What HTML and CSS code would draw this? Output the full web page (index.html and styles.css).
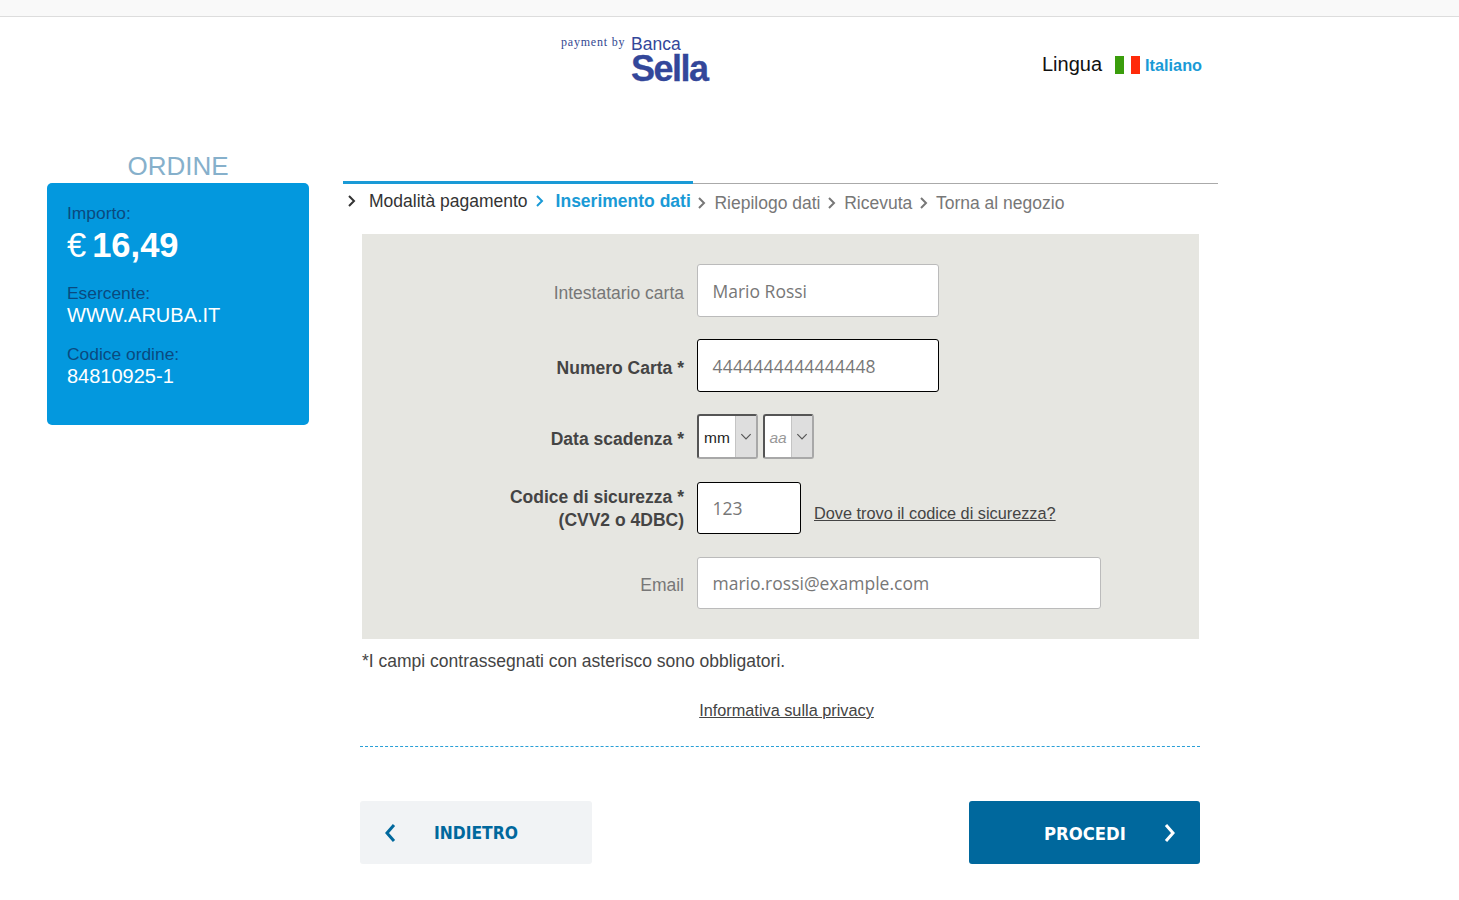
FILE: index.html
```html
<!DOCTYPE html>
<html lang="it">
<head>
    <meta charset="UTF-8">
    <title>Pagamento</title>
    <link rel="stylesheet" href="styles.css">
</head>
<body>
    <div class="topstrip"></div>
    <div class="header">
        <div class="brand">
            <span class="paymentby">payment by</span>
            <div class="logo"><span class="logo-top">Banca</span><span class="logo-main">Sella</span></div>
        </div>
        <div class="lang">
            <span class="lang-label">Lingua</span>
            <span class="flag"><i class="green"></i><i class="white"></i><i class="red"></i></span>
            <span class="lang-name">Italiano</span>
        </div>
    </div>
    <div class="page">
        <div class="side">
            <p class="side-title">ORDINE</p>
            <div class="box">
                <p class="k">Importo:</p>
                <p class="amount"><span class="euro">€</span>16,49</p>
                <p class="k gap">Esercente:</p>
                <p class="v">WWW.ARUBA.IT</p>
                <p class="k gap">Codice ordine:</p>
                <p class="v">84810925-1</p>
            </div>
        </div>
        <div class="main">
            <div class="steps">
                <span class="step done"><svg class="chev" viewBox="0 0 10 14"><path d="M2 2l5 5-5 5"/></svg>Modalità pagamento</span>
                <span class="step now"><svg class="chev" viewBox="0 0 10 14"><path d="M2 2l5 5-5 5"/></svg>Inserimento dati</span>
                <span class="step"><svg class="chev" viewBox="0 0 10 14"><path d="M2 2l5 5-5 5"/></svg>Riepilogo dati</span>
                <span class="step"><svg class="chev" viewBox="0 0 10 14"><path d="M2 2l5 5-5 5"/></svg>Ricevuta</span>
                <span class="step"><svg class="chev" viewBox="0 0 10 14"><path d="M2 2l5 5-5 5"/></svg>Torna al negozio</span>
            </div>
            <div class="content">
                <div class="form">
                    <div class="row r1">
                        <label class="lbl">Intestatario carta</label>
                        <div class="field w-name">Mario Rossi</div>
                    </div>
                    <div class="row r2">
                        <label class="lbl req">Numero Carta *</label>
                        <div class="field w-name strong digits">4444444444444448</div>
                    </div>
                    <div class="row r3">
                        <label class="lbl req">Data scadenza *</label>
                        <div class="select"><span class="sel-text">mm</span><span class="sel-btn"><svg viewBox="0 0 10 6"><path d="M1 1l4 4 4-4"/></svg></span></div>
                        <div class="select off"><span class="sel-text">aa</span><span class="sel-btn"><svg viewBox="0 0 10 6"><path d="M1 1l4 4 4-4"/></svg></span></div>
                    </div>
                    <div class="row r4">
                        <label class="lbl req lbl-two">Codice di sicurezza *<br>(CVV2 o 4DBC)</label>
                        <div class="field w-cvv strong">123</div>
                        <a class="link where" href="#">Dove trovo il codice di sicurezza?</a>
                    </div>
                    <div class="row r5">
                        <label class="lbl lbl-mail">Email</label>
                        <div class="field w-mail">mario.rossi@example.com</div>
                    </div>
                </div>
                <p class="note">*I campi contrassegnati con asterisco sono obbligatori.</p>
            </div>
            <div class="privacy"><a class="link" href="#">Informativa sulla privacy</a></div>
            <div class="actions">
                <a class="btn back" href="#"><svg class="btn-ico" viewBox="0 0 12 18"><path d="M10 1L3 9l7 8"/></svg><span>INDIETRO</span></a>
                <a class="btn next" href="#"><span>PROCEDI</span><svg class="btn-ico" viewBox="0 0 12 18"><path d="M2 1l7 8-7 8"/></svg></a>
            </div>
        </div>
    </div>
</body>
</html>
```
FILE: styles.css
```css
* {
    box-sizing: border-box;
}
body {
    margin: 0;
    background: white;
    font-family: "Liberation Sans", Arial, sans-serif;
    color: #333;
}
p {
    margin: 0;
}
.topstrip {
    height: 17px;
    background: #f9f9f9;
    border-bottom: 1px solid #ddd;
}
.header {
    display: flex;
    height: 117px;
    padding-left: 561px;
}
.brand {
    display: flex;
    width: 481px;
    padding-top: 18px;
}
.paymentby {
    font-family: "Liberation Serif", serif;
    font-size: 12px;
    color: #33478f;
    letter-spacing: 0.8px;
    width: 70px;
}
.logo {
    display: flex;
    flex-direction: column;
    color: #33479a;
}
.logo-top {
    font-size: 17.5px;
    line-height: 18px;
    font-weight: normal;
}
.logo-main {
    font-size: 36px;
    font-weight: bold;
    line-height: 30px;
    letter-spacing: -1.5px;
    margin-top: 1px;
    -webkit-text-stroke: 0.3px #33479a;
}
.lang {
    display: flex;
    align-items: center;
    height: 30px;
    margin-top: 32px;
}
.lang-label {
    font-size: 20px;
    color: #111;
    margin-right: 13px;
}
.flag {
    display: flex;
    height: 18px;
    margin-top: 2px;
    margin-right: 5px;
}
.flag i {
    width: 9px;
    display: block;
}
.flag .green {
    background: #3a9d0c;
}
.flag .white {
    background: white;
    width: 7px;
}
.flag .red {
    background: #ff2a0a;
}
.lang-name {
    font-size: 16.3px;
    font-weight: bold;
    color: #1a9ad6;
    margin-top: 2px;
}
.page {
    display: flex;
    padding-left: 47px;
    padding-top: 17px;
}
.side {
    width: 262px;
    margin-right: 34px;
}
.side-title {
    font-size: 26px;
    line-height: 30px;
    margin-bottom: 2px;
    text-align: center;
    color: #86b0cb;
}
.box {
    height: 242px;
    background: #0398de;
    border-radius: 5px;
    padding: 20px 20px;
    font-size: 17.4px;
    color: white;
}
.box .k {
    color: #0a4a80;
    line-height: 20px;
}
.box .k.gap {
    margin-top: 17px;
}
.box .v {
    font-size: 20px;
    line-height: 24px;
}
.amount {
    font-size: 34.5px;
    font-weight: bold;
    line-height: 41px;
    margin-top: 2px;
}
.euro {
    font-weight: normal;
    margin-right: 6px;
}
.main {
    width: 875px;
}
.steps {
    display: flex;
    height: 51px;
    margin-top: 32px;
    border-top: 1px solid #aaa;
    position: relative;
    font-size: 17.5px;
    color: #777;
    padding-left: 4px;
}
.steps::before {
    content: "";
    position: absolute;
    left: 0;
    top: -3px;
    width: 350px;
    height: 3px;
    background: #1a9ad6;
}
.step {
    display: flex;
    align-items: center;
    height: 38px;
    margin-right: 6.7px;
}
.step.done {
    color: #333;
    margin-top: -2px;
    margin-right: 7px;
}
.step.done .chev {
    margin-right: 12px;
}
.step.now {
    color: #1a9ad6;
    font-weight: bold;
    margin-top: -2px;
}
.step.now .chev {
    margin-right: 11px;
}
.chev {
    width: 10px;
    height: 14px;
    margin-right: 7px;
    fill: none;
    stroke: currentColor;
    stroke-width: 2;
}
.content {
    margin-left: 19px;
    width: 837px;
}
.form {
    background: #e6e6e1;
    height: 405px;
    padding-top: 30px;
}
.row {
    display: flex;
    align-items: center;
}
.r1 {
    height: 53px;
    margin-bottom: 22px;
}
.r2 {
    height: 53px;
    margin-bottom: 22px;
}
.r3 {
    height: 45px;
    margin-bottom: 23px;
}
.r4 {
    height: 52px;
    margin-bottom: 23px;
}
.r5 {
    height: 52px;
}
.lbl {
    width: 322px;
    text-align: right;
    margin-right: 13px;
    margin-top: 6px;
    font-size: 17.5px;
    line-height: 23px;
    color: #777;
}
.lbl.req {
    font-weight: bold;
    color: #444;
}
.lbl.lbl-two {
    margin-top: 2px;
}
.lbl.lbl-mail {
    margin-top: 4px;
}
.field {
    height: 100%;
    background: white;
    border: 1px solid #bbb;
    border-radius: 3px;
    padding-left: 14.5px;
    display: flex;
    align-items: center;
    font-family: "Open Sans", sans-serif;
    font-size: 17.5px;
    color: #777;
}
.field.strong {
    border-color: #000;
}
.field.digits {
    letter-spacing: 0.2px;
}
.w-name {
    width: 242px;
}
.w-cvv {
    width: 104px;
}
.w-mail {
    width: 404px;
}
.select {
    width: 61px;
    height: 45px;
    display: flex;
    background: white;
    border: 2px solid #a8a8a8;
    border-top-color: #555;
    border-left-color: #555;
    border-radius: 3px;
    margin-right: 5px;
    font-size: 15.5px;
    color: #222;
}
.select.off {
    width: 51px;
    color: #999;
    font-style: italic;
}
.sel-text {
    flex: 1;
    display: flex;
    align-items: center;
    justify-content: center;
    padding-top: 2px;
}
.sel-btn {
    width: 21px;
    display: flex;
    align-items: center;
    justify-content: center;
    background: #dedede;
    border-left: 1px solid #c4c4c4;
}
.sel-btn svg {
    width: 12px;
    height: 7px;
    fill: none;
    stroke: #555;
    stroke-width: 1;
}
.link {
    color: #444;
    font-size: 16.3px;
    text-decoration: underline;
}
.where {
    margin-left: 13px;
    margin-top: 10px;
}
.note {
    margin-top: 11px;
    font-size: 17.5px;
    line-height: 22px;
    color: #444;
}
.privacy {
    margin-left: 17px;
    width: 840px;
    margin-top: 27px;
    padding-top: 2px;
    padding-left: 13px;
    height: 48px;
    text-align: center;
    border-bottom: 1px dashed #2a9fd6;
}
.actions {
    display: flex;
    justify-content: space-between;
    margin-left: 17px;
    width: 840px;
    margin-top: 54px;
}
.btn {
    display: flex;
    align-items: center;
    height: 63px;
    width: 232px;
    border-radius: 3px;
    font-family: "DejaVu Sans Condensed", "DejaVu Sans", sans-serif;
    font-size: 17.3px;
    font-weight: bold;
    text-decoration: none;
}
.btn span {
    padding-top: 1px;
}
.btn.back {
    background: #f1f3f5;
    color: #00689d;
    padding-left: 24px;
}
.btn.back span {
    margin-left: 38px;
}
.btn.next {
    width: 231px;
    background: #00689d;
    color: white;
    padding-left: 75px;
    font-size: 18.3px;
}
.btn.next span {
    margin-right: 38px;
}
.btn-ico {
    width: 12px;
    height: 18px;
    fill: none;
    stroke: currentColor;
    stroke-width: 3;
}
```
